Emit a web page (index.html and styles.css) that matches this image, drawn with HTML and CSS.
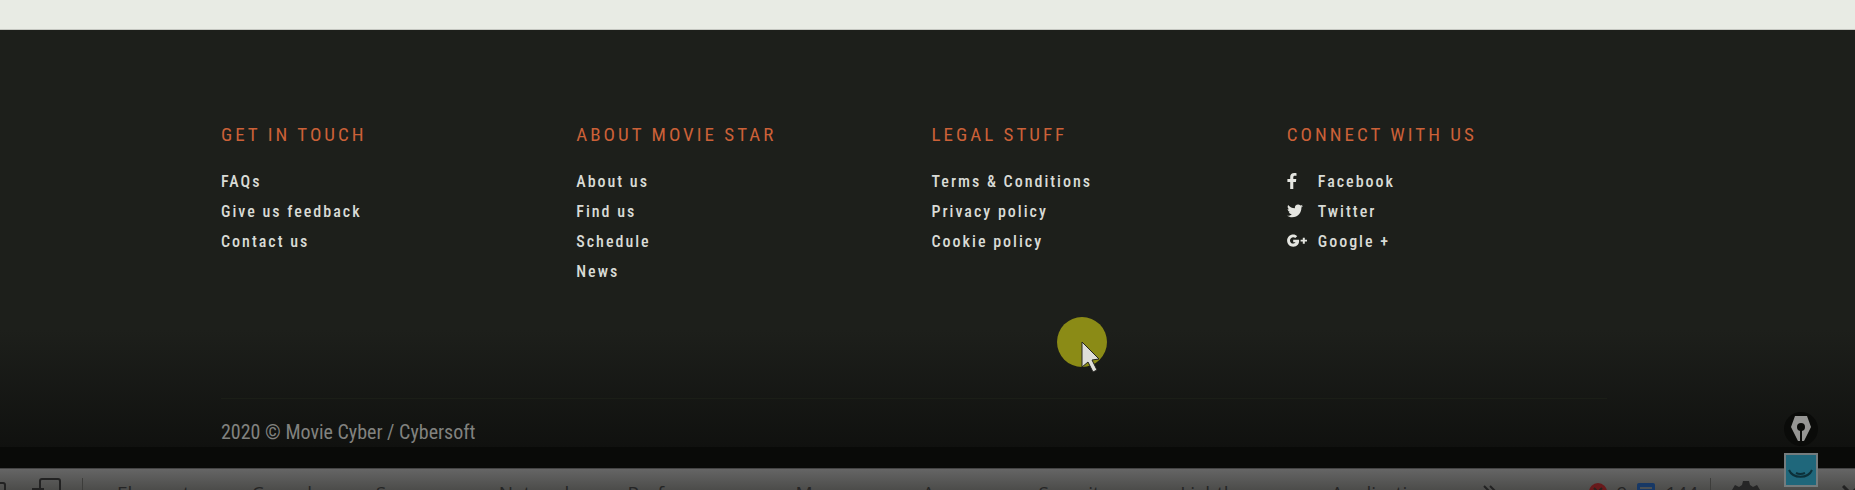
FILE: index.html
```html
<!DOCTYPE html>
<html lang="en">
<head>
<meta charset="utf-8">
<title>Movie Star</title>
<link rel="stylesheet" href="styles.css">
</head>
<body>
<main class="page-end"></main>
<footer class="footer">
  <div class="columns">
    <section>
      <h2 class="title">Get in touch</h2>
      <ul class="links">
        <li><a href="#">FAQs</a></li>
        <li><a href="#">Give us feedback</a></li>
        <li><a href="#">Contact us</a></li>
      </ul>
    </section>
    <section>
      <h2 class="title">About Movie Star</h2>
      <ul class="links">
        <li><a href="#">About us</a></li>
        <li><a href="#">Find us</a></li>
        <li><a href="#">Schedule</a></li>
        <li><a href="#">News</a></li>
      </ul>
    </section>
    <section>
      <h2 class="title">Legal stuff</h2>
      <ul class="links">
        <li><a href="#">Terms &amp; Conditions</a></li>
        <li><a href="#">Privacy policy</a></li>
        <li><a href="#">Cookie policy</a></li>
      </ul>
    </section>
    <section>
      <h2 class="title">Connect with us</h2>
      <ul class="links">
        <li><a href="#"><svg class="social-icon" viewBox="0 0 20 16"><path d="M6.300 16V9H8.900L9.300 6.100H6.300V4.400C6.300 3.300 6.700 2.800 7.900 2.800H9.500V.2C9 .1 8.200 0 7.300 0 4.700 0 3.200 1.500 3.200 4V6.100H.4V9H3.200V16Z"/></svg>Facebook</a></li>
        <li><a href="#"><svg class="social-icon" viewBox="0 0 20 16"><path d="M16 3C15.400 3.300 14.800 3.500 14.100 3.600 14.800 3.200 15.300 2.500 15.600 1.700 14.900 2.100 14.200 2.400 13.500 2.500 12.800 1.900 12 1.500 11.100 1.500 9.100 1.500 7.500 3.200 7.900 5.300 5.200 5.200 2.700 3.900 1.100 1.900.2 3.400.7 5.300 2.100 6.300 1.600 6.300 1.100 6.100.6 5.900.7 7.400 1.700 8.700 3.200 9 2.700 9.200 2.200 9.200 1.800 9.100 2.200 10.400 3.400 11.300 4.800 11.400 3.500 12.400 1.800 13 0 12.800 1.500 13.700 3.200 14.300 5 14.300 11.200 14.300 14.600 9.200 14.400 4.500 15.100 4.100 15.600 3.600 16 3Z"/></svg>Twitter</a></li>
        <li><a href="#"><svg class="social-icon" viewBox="0 0 20 16"><path d="M10.200 3.300 8.300 5.100C6.500 3.200 3 4.500 3 7.500S6.700 11.800 8.600 9.300H6.200V6.700H12C12.700 10.700 10.100 13.700 6.300 13.700 2.800 13.700.1 11 .1 7.500S2.800 1.400 6.300 1.400C7.800 1.400 9.100 2 10.200 3.300ZM15.800 4.700H17.800V6.700H20V8.600H17.800V10.700H15.800V8.600H13.600V6.700H15.800Z"/></svg>Google +</a></li>
      </ul>
    </section>
  </div>
  <p class="copyright">2020 © Movie Cyber / Cybersoft</p>
</footer>
<nav class="devtools">
  <button class="inspect" aria-label="Inspect"><svg viewBox="0 0 62 22" width="62" height="22"><path d="M-4 5H3Q5 5 5 7V22M40 11V3Q40 1 42 1H58Q60 1 60 3V22M32 11H44M33 11V22" fill="none" stroke="#222" stroke-width="2"/></svg></button>
  <span class="rule"></span>
  <div class="tabs">
    <button>Elements</button><button>Console</button><button>Sources</button><button>Network</button><button>Performance</button><button>Memory</button><button>Augury</button><button class="tab-wide">Security</button><button>Lighthouse</button><button>Application</button><button class="more" aria-label="More tabs"><svg viewBox="0 0 13 12" width="13" height="12"><path d="M1 1 6 6 1 11M7 1 12 6 7 11" fill="none" stroke="#222" stroke-width="2"/></svg></button>
  </div>
  <button class="counts"><svg viewBox="0 0 18 18" width="18" height="18"><circle cx="9" cy="9" r="9" fill="#68191b"/><path d="M5 5 13 13M13 5 5 13" stroke="#292320" stroke-width="2"/></svg>9<svg viewBox="0 0 18 18" width="18" height="18"><rect width="18" height="18" rx="2" fill="#173865"/><path d="M3 5H15M3 9H15" stroke="#4b5054" stroke-width="2"/></svg>144</button>
  <span class="rule"></span>
  <button class="gear" aria-label="Settings"><svg viewBox="0 0 28 28" width="28" height="28"><path d="M11 0H17L18 4 21 6 25 4 28 9 25 12V16L28 19 25 24 21 22 18 24 17 28H11L10 24 7 22 3 24 0 19 3 16V12L0 9 3 4 7 6 10 4ZM14 9A5 5 0 1 0 14 19 5 5 0 1 0 14 9Z" fill="#262626"/></svg></button>
  <button class="close" aria-label="Close"><svg viewBox="0 0 18 18" width="18" height="18"><path d="M1 1 17 17M17 1 1 17" stroke="#222" stroke-width="3"/></svg></button>
</nav>
<svg class="pointer" viewBox="0 0 50 58"><circle cx="25" cy="25" r="25" fill="#8b8b16"/><path d="M25 25V50L31 45 36 55 40 53 35 43 42 42Z" fill="#deded9" stroke="#242421" stroke-width="1"/></svg>
<div class="widgets">
  <svg viewBox="0 0 34 34"><circle cx="17" cy="17" r="17" fill="#0a0b09"/><path d="M11 4H23L27 15 20 29H18V17H16V29H14L7 15Z" fill="#969694"/><circle cx="17" cy="15" r="4" fill="#0a0b09"/></svg>
  <svg viewBox="0 0 34 34"><rect x="1" y="1" width="32" height="32" fill="#1f677b" stroke="#747c7e" stroke-width="2"/><path d="M5 17C9 26 24 26 28 17M12 20Q16 22 21 20" fill="none" stroke="#0c3039" stroke-width="2"/></svg>
</div>
</body>
</html>
```
FILE: styles.css
```css
* { box-sizing: border-box; }
body {
  position: relative;
  display: flex;
  flex-direction: column;
  margin: 0;
  overflow: hidden;
  height: 100vh;
  background: #090a08;
  font-family: "Roboto Condensed", Roboto, sans-serif;
}
.page-end { height: 30px; background: #e8ebe4; border-bottom: 1px solid #c4c6c0; }
.footer {
  padding: 92px 248px 3px 221px;
  background: linear-gradient(#1d1f1b 0, #1d1f1b 300px, #10110f 418px);
}
.columns {
  display: grid;
  grid-template-columns: repeat(4, 1fr);
  gap: 35px;
  min-height: 277px;
  border-bottom: 1px solid #1b1e17;
}
.title {
  margin: 0 0 18px;
  color: #cc6138;
  font-size: 19px;
  font-weight: 400;
  line-height: 26px;
  letter-spacing: 3px;
  text-transform: uppercase;
}
.links { margin: 0; padding: 0; list-style: none; }
.links a {
  display: flex;
  align-items: center;
  height: 30px;
  color: #d9dbd6;
  font-size: 16px;
  font-weight: 500;
  letter-spacing: 2px;
  text-decoration: none;
}
.social-icon { width: 20px; height: 16px; margin-right: 11px; fill: #e4e5e0; }
.copyright { margin: 21px 0 0; color: #81827f; font-size: 20px; line-height: 24px; }
.devtools {
  display: flex;
  align-items: flex-start;
  height: 22px;
  margin-top: auto;
  overflow: hidden;
  border-top: 1px solid #444;
  background: linear-gradient(#656565, #4c4c4a);
}
.devtools button {
  margin: 0;
  padding: 0;
  border: 0;
  background: none;
  color: #252525;
  font: 19px/24px "Open Sans", sans-serif;
}
.devtools svg { display: block; }
.devtools .inspect { padding-top: 9px; }
.rule { flex: none; width: 1px; height: 22px; margin: 9px 0 0; background: #3d3d3b; }
.inspect + .rule { margin-left: 20px; }
.tabs { display: flex; flex: 1; align-items: flex-start; gap: 53px; padding: 12px 0 0 34px; }
.devtools .tab-wide { padding-right: 18px; }
.devtools .more { padding-top: 4px; }
.devtools .counts { display: flex; gap: 10px; padding: 14px 12px 0 0; line-height: 20px; }
.devtools .gear { padding: 12px 0 0 21px; }
.devtools .close { padding: 16px 0 0 82px; margin-right: -5px; }
.pointer { position: absolute; left: 1057px; top: 317px; width: 50px; }
.widgets { position: absolute; right: 37px; bottom: 3px; display: grid; gap: 7px; }
.widgets svg { display: block; width: 34px; }
```
